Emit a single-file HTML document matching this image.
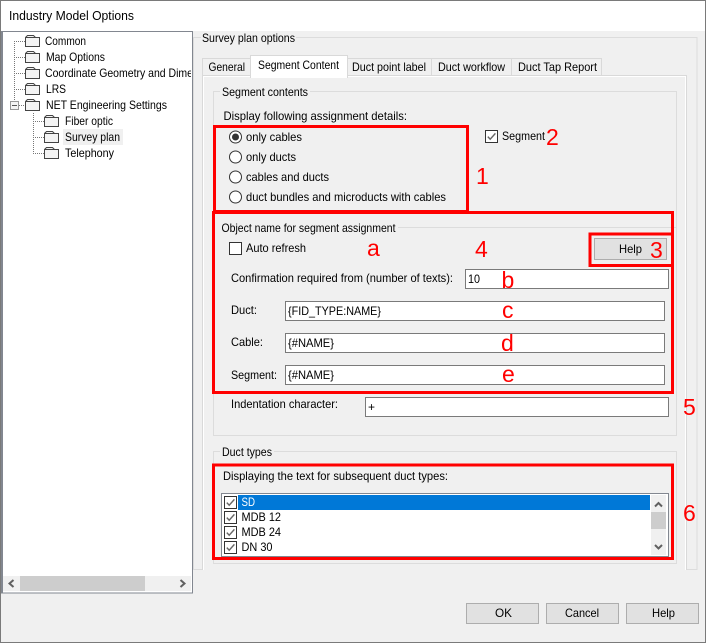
<!DOCTYPE html>
<html>
<head>
<meta charset="utf-8">
<style>
html,body{margin:0;padding:0;background:#f0f0f0;}
svg{display:block;width:706px;height:643px;}
text{font-family:"Liberation Sans",sans-serif;font-size:12px;fill:#000;}
.r{font-size:23px;fill:#f00;}
.t{font-size:12.5px;}
.c{shape-rendering:crispEdges;}
</style>
</head>
<body>
<svg xmlns="http://www.w3.org/2000/svg" width="706" height="643" viewBox="0 0 706 643">
<defs>
<g id="folder"><path d="M.5 11.5V2.500L2.500 .5H8.500L10.500 2.500H14.500V11.500Z" fill="#f4f4f4" stroke="#444" stroke-width="1"/><path d="M.5 2.500H10.500" stroke="#444" stroke-width="1" fill="none"/></g>
<g id="cb"><rect class="c" x=".5" y=".5" width="12" height="12" fill="#fff" stroke="#333"/><path d="M2.800 6.600L5.200 9.200L10.400 3.400" fill="none" stroke="#666" stroke-width="1.400"/></g>
<clipPath id="treeclip"><rect x="3" y="33" width="188" height="543"/></clipPath>
</defs>

<!-- window -->
<rect class="c" width="706" height="643" fill="#f0f0f0"/>
<rect class="c" x="1" y="1" width="704" height="30" fill="#fff"/>
<rect class="c" x=".5" y=".5" width="705" height="642" fill="none" stroke="#7a7a7a"/>
<text class="t" x="9" y="20" textLength="125" lengthAdjust="spacingAndGlyphs">Industry Model Options</text>

<!-- tree -->
<rect class="c" x="1.500" y="31.500" width="191" height="561.500" fill="#fff" stroke="#828790"/>
<rect class="c" x="1" y="31" width="2" height="562" fill="#828790"/>
<g clip-path="url(#treeclip)">
<path class="c" d="M14.500 41V101M14 41.500H25M14 57.500H25M14 73.500H25M14 89.500H25M19 105.500H25M33.500 113V153M33 121.500H44M33 137.500H44M33 153.500H44" stroke="#777" stroke-dasharray="1 1" fill="none"/>
<rect class="c" x="10.500" y="101.500" width="8" height="8" fill="#f5f5f5" stroke="#999"/>
<path class="c" d="M12 105.500H17" stroke="#555"/>
<use href="#folder" x="25" y="35"/><use href="#folder" x="25" y="51"/><use href="#folder" x="25" y="67"/><use href="#folder" x="25" y="83"/><use href="#folder" x="25" y="99"/>
<use href="#folder" x="44" y="115"/><use href="#folder" x="44" y="131"/><use href="#folder" x="44" y="147"/>
<rect class="c" x="63" y="129" width="60" height="16" fill="#f0f0f0"/>
<text x="45" y="45" textLength="41" lengthAdjust="spacingAndGlyphs">Common</text>
<text x="46" y="61" textLength="59" lengthAdjust="spacingAndGlyphs">Map Options</text>
<text x="45" y="77" textLength="148" lengthAdjust="spacingAndGlyphs">Coordinate Geometry and Dime</text>
<text x="46" y="93" textLength="20" lengthAdjust="spacingAndGlyphs">LRS</text>
<text x="46" y="109" textLength="121" lengthAdjust="spacingAndGlyphs">NET Engineering Settings</text>
<text x="65" y="125" textLength="48" lengthAdjust="spacingAndGlyphs">Fiber optic</text>
<text x="65" y="141" textLength="55" lengthAdjust="spacingAndGlyphs">Survey plan</text>
<text x="65" y="157" textLength="49" lengthAdjust="spacingAndGlyphs">Telephony</text>
</g>
<rect class="c" x="3" y="576" width="188" height="15" fill="#f0f0f0"/>
<rect class="c" x="20" y="576" width="125" height="15" fill="#cdcdcd"/>
<path d="M13.500 580L9.500 583.500L13.500 587M180.500 580L184.500 583.500L180.500 587" fill="none" stroke="#606060" stroke-width="2"/>

<!-- survey plan group -->
<path class="c" d="M201 37.500H193.500V569.500H697.500M697 569.500V37.500H296" fill="none" stroke="#dcdcdc"/>
<text x="202" y="42" textLength="93" lengthAdjust="spacingAndGlyphs">Survey plan options</text>

<!-- tab panel -->
<rect class="c" x="202" y="75" width="485" height="495" fill="#f0f0f0"/>
<path class="c" d="M202.500 570V75.500H686.500V570" fill="none" stroke="#d9d9d9"/>
<path class="c" d="M203.500 570V76.500H685.500V570" fill="none" stroke="#fff"/>
<path class="c" d="M202.500 75V58.500H250.500V75M347.500 75V58.500H431.500V75M431.500 58.500H511.500V75M511.500 58.500H601.500V75" fill="#f0f0f0" stroke="#d9d9d9"/>
<rect class="c" x="250.500" y="55.500" width="97" height="22" fill="#fff" stroke="#d9d9d9"/>
<rect class="c" x="251" y="75" width="96" height="3" fill="#fff"/>
<text x="208.500" y="71" textLength="36.500" lengthAdjust="spacingAndGlyphs">General</text>
<text x="258" y="69" textLength="81" lengthAdjust="spacingAndGlyphs">Segment Content</text>
<text x="352" y="71" textLength="74" lengthAdjust="spacingAndGlyphs">Duct point label</text>
<text x="438" y="71" textLength="67" lengthAdjust="spacingAndGlyphs">Duct workflow</text>
<text x="518" y="71" textLength="79" lengthAdjust="spacingAndGlyphs">Duct Tap Report</text>

<!-- segment contents -->
<path class="c" d="M220 91.500H213.500V435.500H676.500V91.500H310" fill="none" stroke="#dcdcdc"/>
<text x="222" y="96" textLength="86" lengthAdjust="spacingAndGlyphs">Segment contents</text>
<text x="223.500" y="120" textLength="183.500" lengthAdjust="spacingAndGlyphs">Display following assignment details:</text>

<g fill="#fff" stroke="#333">
<circle cx="235.500" cy="137" r="6"/><circle cx="235.500" cy="157" r="6"/><circle cx="235.500" cy="177" r="6"/><circle cx="235.500" cy="197" r="6"/>
</g>
<circle cx="235.500" cy="137" r="3.500" fill="#333"/>
<text x="246" y="141" textLength="56" lengthAdjust="spacingAndGlyphs">only cables</text>
<text x="246" y="161" textLength="50" lengthAdjust="spacingAndGlyphs">only ducts</text>
<text x="246" y="181" textLength="83" lengthAdjust="spacingAndGlyphs">cables and ducts</text>
<text x="246" y="201" textLength="200" lengthAdjust="spacingAndGlyphs">duct bundles and microducts with cables</text>
<use href="#cb" x="485" y="130"/>
<text x="502" y="140" textLength="43" lengthAdjust="spacingAndGlyphs">Segment</text>

<!-- object name -->
<path class="c" d="M398 227.500H676" stroke="#dcdcdc"/>
<text x="221.500" y="232" textLength="174" lengthAdjust="spacingAndGlyphs">Object name for segment assignment</text>
<rect class="c" x="229.500" y="242.500" width="12" height="12" fill="#fff" stroke="#333"/>
<text x="246" y="252" textLength="60" lengthAdjust="spacingAndGlyphs">Auto refresh</text>
<rect class="c" x="594.500" y="238.500" width="72" height="21" fill="#e1e1e1" stroke="#adadad"/>
<text x="619" y="253" textLength="23" lengthAdjust="spacingAndGlyphs">Help</text>

<text x="231" y="282" textLength="222" lengthAdjust="spacingAndGlyphs">Confirmation required from (number of texts):</text>
<text x="231" y="314" textLength="26" lengthAdjust="spacingAndGlyphs">Duct:</text>
<text x="231" y="346" textLength="32" lengthAdjust="spacingAndGlyphs">Cable:</text>
<text x="231" y="379" textLength="46" lengthAdjust="spacingAndGlyphs">Segment:</text>
<text x="231" y="408" textLength="107" lengthAdjust="spacingAndGlyphs">Indentation character:</text>

<g fill="#fff" stroke="#7a7a7a" class="c">
<rect x="465.500" y="269.500" width="203" height="19"/>
<rect x="285.500" y="301.500" width="379" height="19"/>
<rect x="285.500" y="333.500" width="379" height="19"/>
<rect x="285.500" y="365.500" width="379" height="19"/>
<rect x="365.500" y="397.500" width="303" height="19"/>
</g>
<text x="468" y="283" textLength="12" lengthAdjust="spacingAndGlyphs">10</text>
<text x="288" y="315" textLength="93" lengthAdjust="spacingAndGlyphs">{FID_TYPE:NAME}</text>
<text x="288" y="347" textLength="46" lengthAdjust="spacingAndGlyphs">{#NAME}</text>
<text x="288" y="379" textLength="46" lengthAdjust="spacingAndGlyphs">{#NAME}</text>
<text x="368" y="411">+</text>

<!-- duct types -->
<path class="c" d="M220 451.500H213.500V563.500H676.500V451.500H274" fill="none" stroke="#dcdcdc"/>
<text x="222" y="456" textLength="50" lengthAdjust="spacingAndGlyphs">Duct types</text>
<text x="223" y="480" textLength="225" lengthAdjust="spacingAndGlyphs">Displaying the text for subsequent duct types:</text>

<rect class="c" x="221.500" y="493.500" width="447" height="63" fill="#fff" stroke="#828790"/>
<rect class="c" x="238" y="495" width="412" height="15" fill="#0078d7"/>
<use href="#cb" x="224" y="496"/><use href="#cb" x="224" y="511"/><use href="#cb" x="224" y="526"/><use href="#cb" x="224" y="541"/>
<text x="241.500" y="506" textLength="13.500" lengthAdjust="spacingAndGlyphs" style="fill:#fff">SD</text>
<text x="241.500" y="521" textLength="39.500" lengthAdjust="spacingAndGlyphs">MDB 12</text>
<text x="241.500" y="536" textLength="39.500" lengthAdjust="spacingAndGlyphs">MDB 24</text>
<text x="241.500" y="551" textLength="31" lengthAdjust="spacingAndGlyphs">DN 30</text>
<rect class="c" x="651" y="495" width="15" height="60" fill="#f0f0f0"/>
<rect class="c" x="651" y="512" width="15" height="17" fill="#cdcdcd"/>
<path d="M655 506.500L658.500 503L662 506.500M655 545L658.500 548.500L662 545" fill="none" stroke="#606060" stroke-width="2"/>

<!-- red annotation boxes -->
<g class="c" fill="none" stroke="#f00" stroke-width="3">
<rect x="214.500" y="126.500" width="253" height="85"/>
<rect x="213.500" y="212.500" width="459" height="180"/>
<rect x="590" y="234" width="82.500" height="31.500"/>
<rect x="213.500" y="465" width="459" height="93.500"/>
</g>
<text class="r" x="476" y="184">1</text>
<text class="r" x="546" y="145">2</text>
<text class="r" x="650" y="258">3</text>
<text class="r" x="475" y="257">4</text>
<text class="r" x="683" y="415">5</text>
<text class="r" x="683" y="521">6</text>
<text class="r" x="367" y="256">a</text>
<text class="r" x="501.500" y="288">b</text>
<text class="r" x="502" y="318">c</text>
<text class="r" x="501" y="351">d</text>
<text class="r" x="502" y="382">e</text>

<!-- bottom buttons -->
<g class="c" fill="#e1e1e1" stroke="#adadad">
<rect x="466.500" y="603.500" width="72" height="20"/>
<rect x="546.500" y="603.500" width="72" height="20"/>
<rect x="626.500" y="603.500" width="72" height="20"/>
</g>
<text x="495" y="617" textLength="17" lengthAdjust="spacingAndGlyphs">OK</text>
<text x="565" y="617" textLength="34" lengthAdjust="spacingAndGlyphs">Cancel</text>
<text x="652" y="617" textLength="23" lengthAdjust="spacingAndGlyphs">Help</text>
</svg>
</body>
</html>
